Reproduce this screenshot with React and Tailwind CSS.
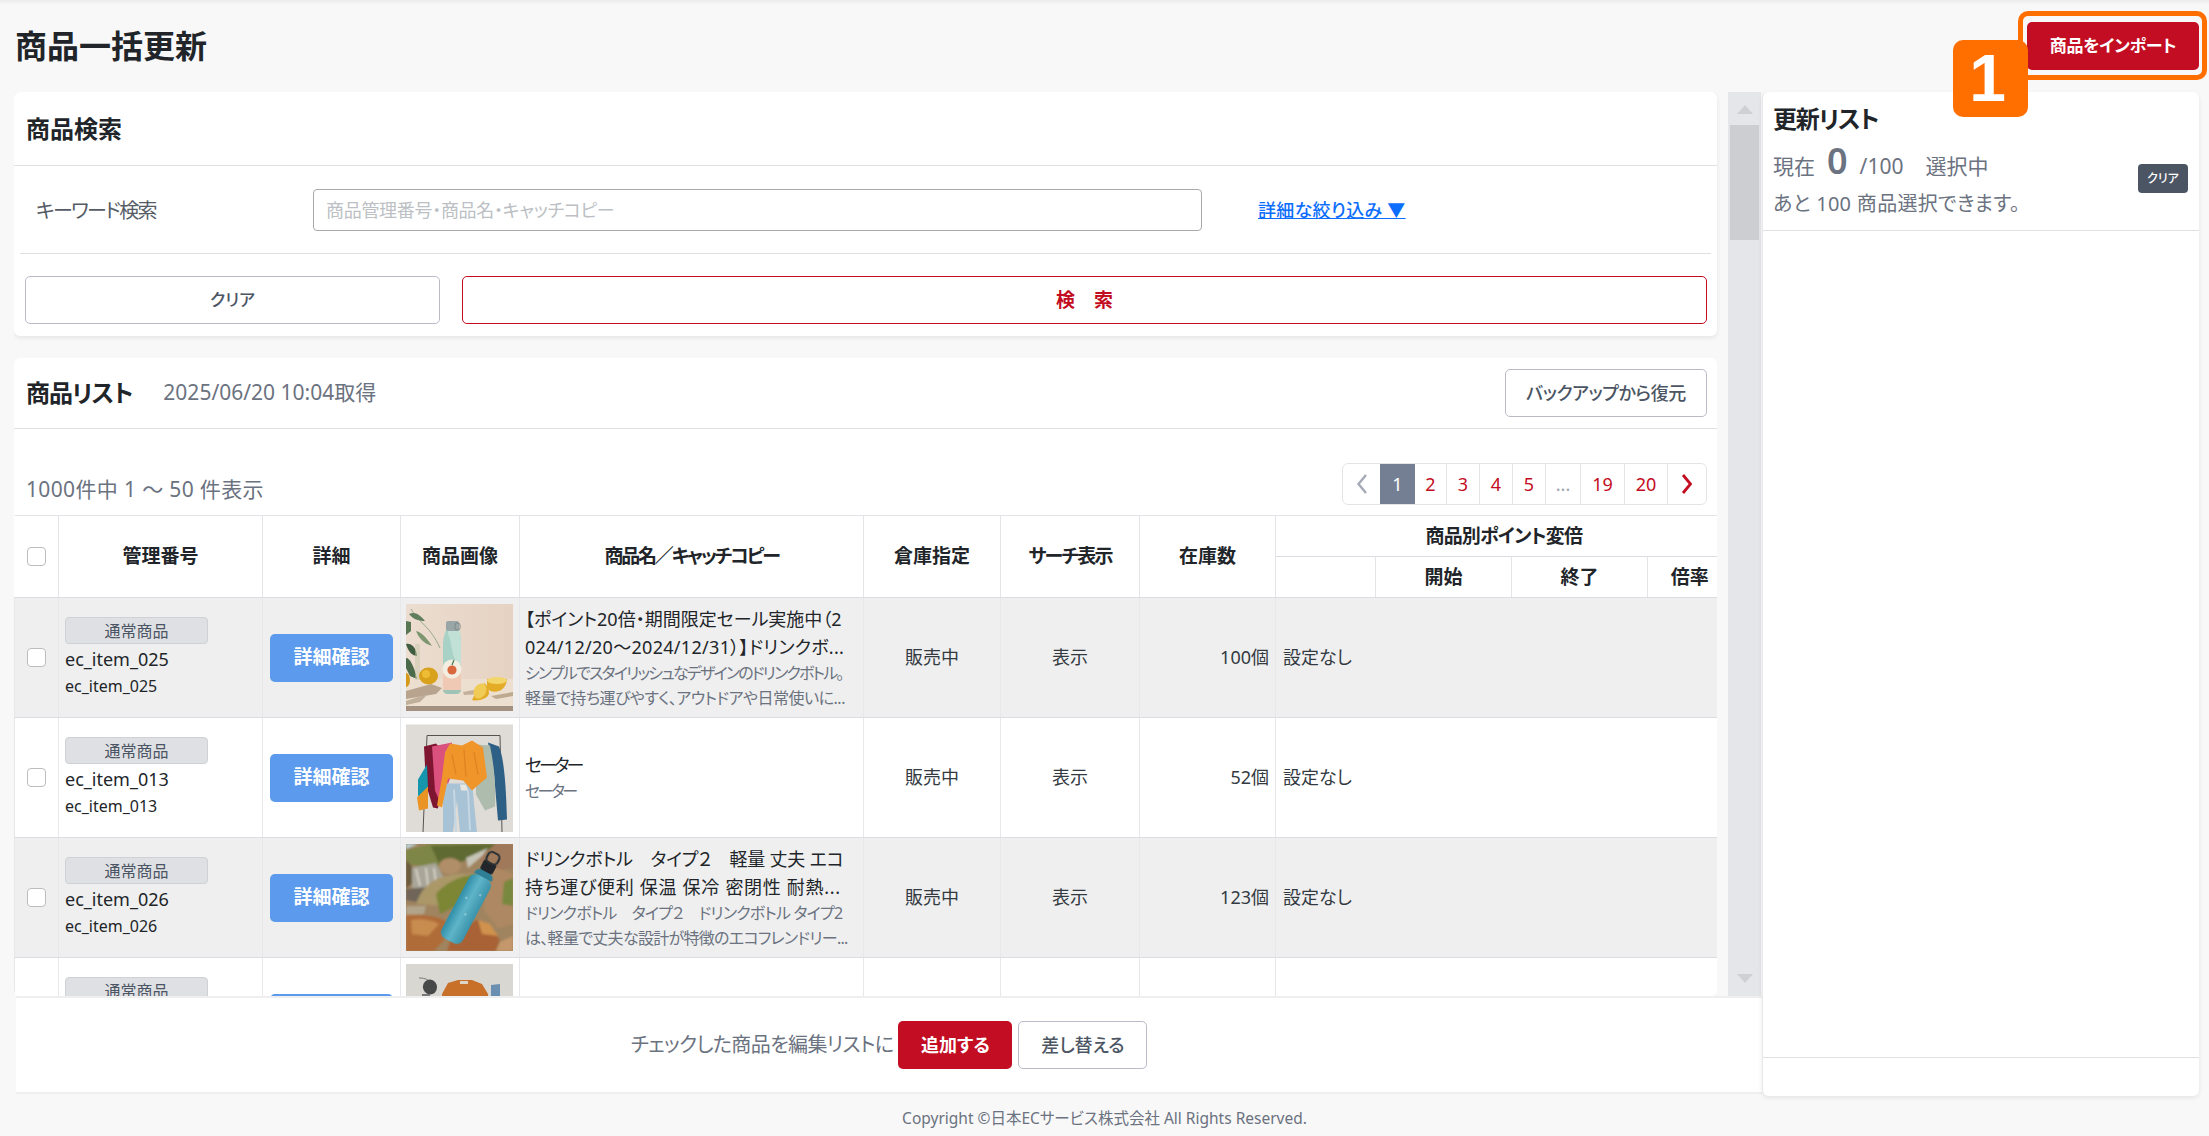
import React from 'react';

const photoBottle = (
    <svg viewBox="0 0 107 107" className="block w-[107px] h-[107px]">
        <defs>
            <filter id="soft1"><feGaussianBlur stdDeviation="0.5" /></filter>
            <linearGradient id="wall1" x1="0" x2="1" y1="0" y2="0">
                <stop offset="0" stopColor="#ecddd0" />
                <stop offset="1" stopColor="#e5d2c2" />
            </linearGradient>
        </defs>
        <rect width="107" height="107" fill="url(#wall1)" />
        <g filter="url(#soft1)">
            <rect x="0" y="75" width="107" height="27" fill="#ecdfd0" />
            <rect x="0" y="102" width="107" height="5" fill="#a5917f" />
            <path d="M0 87L25 80L36 84L30 90L0 95Z" fill="#b8a48e" />
            <path d="M0 97L22 90L14 98L0 101Z" fill="#bfae99" />
            <path d="M57 88L78 84L76 90L58 91Z" fill="#c2b09b" />
            <path d="M85 92L107 88L107 92L90 95Z" fill="#bda98e" />
            <path d="M5 5C14 20 24 22 34 44" stroke="#7e9a78" strokeWidth="0.8" fill="none" />
            <path d="M3 10C9 7 14 11 19 17C12 17 7 15 3 10Z" fill="#5f7e5c" />
            <path d="M10 27C15 28 20 33 26 42C19 40 13 35 10 27Z" fill="#7d9670" />
            <path d="M0 17L5 18L5 27L0 31Z" fill="#587652" />
            <path d="M0 40C5 39 10 43 11 52C6 52 2 47 0 40Z" fill="#3f5c3f" />
            <path d="M0 54C4 54 8 62 11 75L4 72L0 64Z" fill="#4b6a4a" />
            <rect x="9" y="40" width="5" height="36" fill="#c8c5a8" opacity="0.5" />
            <ellipse cx="22.5" cy="72" rx="9.5" ry="8.5" fill="#d9a21c" />
            <ellipse cx="20" cy="70" rx="4" ry="4" fill="#eebc36" />
            <ellipse cx="0" cy="76" rx="4" ry="7" fill="#d59a1c" />
            <path d="M40 26L53 26C55 32 55 34 55 42L55 86C55 88 53 90 50 90L42 90C39 90 37 88 37 86L37 42C37 34 38 32 40 26Z" fill="#a9d2c6" />
            <path d="M42 30C47 40 44 50 52 60L55 60L55 42C55 34 55 32 53 26L42 26Z" fill="#c1e0d6" />
            <path d="M37 68L55 68L55 86C55 88 53 90 50 90L42 90C39 90 37 88 37 86Z" fill="#efc9b3" />
            <path d="M37 86L55 86C55 88 53 90 50 90L42 90C39 90 37 88 37 86Z" fill="#9ec4b8" />
            <circle cx="46" cy="65" r="9.5" fill="#f3eee2" />
            <circle cx="46" cy="66" r="4.6" fill="#d9693e" />
            <path d="M46 61L48 56" stroke="#3f7a52" strokeWidth="1.2" />
            <rect x="40" y="17" width="13" height="10" rx="2" fill="#9aa6a5" />
            <rect x="49" y="19" width="5" height="7" rx="2" fill="none" stroke="#7e8a8a" strokeWidth="1" />
            <path d="M81 84C84 90 100 90 101 75L81 75Z" fill="#e4ab26" />
            <ellipse cx="91" cy="76.5" rx="10" ry="3.5" fill="#f2d66c" />
            <path d="M69 90L66 96C72 98 83 94 83 89C83 85 81 81 78 79Z" fill="#e4ab26" />
            <ellipse cx="74" cy="87" rx="6" ry="8" transform="rotate(30 74 87)" fill="#f0cb55" />
        </g>
    </svg>
);

const photoSweaters = (
    <svg viewBox="0 0 107 107" className="block w-[107px] h-[108px]">
        <defs><filter id="soft2"><feGaussianBlur stdDeviation="0.5" /></filter></defs>
        <rect width="107" height="108" fill="#dfdbd6" />
        <g filter="url(#soft2)">
            <path d="M17 108L21 11L94 11L96 108" fill="none" stroke="#55524f" strokeWidth="1" />
            <path d="M82 18L93 22C98 34 100 60 101 95L92 96L88 50Z" fill="#2f5f84" />
            <path d="M70 20L84 21C88 40 90 60 89 82L79 86L70 70Z" fill="#aebcae" />
            <path d="M18 22L30 19L40 30L32 84L27 83L20 60Z" fill="#7e1330" />
            <path d="M12 55L21 40L22 64L12 73Z" fill="#1296ad" />
            <path d="M11 73L22 62L22 84L13 86Z" fill="#ea9427" />
            <path d="M26 22L46 18L46 50L34 78L29 66Z" fill="#d9517c" />
            <path d="M37 59L66 59L71 108L54 108L51 76L47 108L37 108Z" fill="#a9c3d6" />
            <path d="M48 65L50 108M62 66L64 106" stroke="#c5d7e3" strokeWidth="2" />
            <path d="M44 19L56 21L66 16L77 23L81 53L66 66L57 56L42 54L36 83L31 81L36 53L39 28Z" fill="#f0952b" />
            <path d="M46 30L50 50M58 25L60 52M68 28L72 50" stroke="#d97e1c" strokeWidth="1.4" opacity="0.7" />
            <path d="M54 60L60 60L62 66L55 66Z" fill="#e8e6e0" />
        </g>
    </svg>
);

const photoRocks = (
    <svg viewBox="0 0 107 107" className="block w-[107px] h-[107px]">
        <defs>
            <filter id="soft3"><feGaussianBlur stdDeviation="0.9" /></filter>
            <linearGradient id="steel" x1="0" x2="1" y1="0" y2="0">
                <stop offset="0" stopColor="#2f8ea8" />
                <stop offset="0.45" stopColor="#5fb4c8" />
                <stop offset="1" stopColor="#3a93ab" />
            </linearGradient>
        </defs>
        <rect width="107" height="107" fill="#a08460" />
        <g filter="url(#soft3)">
            <path d="M0 0L12 0L0 5Z" fill="#b9d4dd" />
            <path d="M0 6L25 0L90 0L70 12L30 24L0 20Z" fill="#7e8646" />
            <path d="M25 2L90 0L72 14L34 22Z" fill="#5f6a32" />
            <path d="M72 14L90 0L107 0L107 24L84 28Z" fill="#a0785a" />
            <path d="M60 14L82 4L76 12L62 24Z" fill="#c6c4b6" />
            <path d="M4 24L30 19L38 34L28 44L6 44Z" fill="#a9a598" />
            <path d="M10 25L14 42M20 24L22 42M28 24L30 40" stroke="#dcdad0" strokeWidth="1.6" />
            <ellipse cx="44" cy="22" rx="11" ry="8" fill="#b08e68" />
            <path d="M0 45L34 42L20 60L0 56Z" fill="#6f6558" />
            <path d="M0 16L6 22L6 40L0 44Z" fill="#6a5c3e" />
            <path d="M10 60C16 42 28 32 52 30L70 30L40 62Z" fill="#ab9868" />
            <path d="M30 50C38 40 52 32 72 30L50 62L34 70Z" fill="#7c8636" />
            <path d="M0 62L20 62L18 70L0 72Z" fill="#b2a48a" />
            <path d="M0 71C14 70 34 72 41 78L38 96L28 107L0 107Z" fill="#b06c38" />
            <path d="M5 76C14 74 26 76 33 80L22 92L6 90Z" fill="#c88c50" />
            <path d="M41 107L46 92L70 76L84 82L94 96L90 107Z" fill="#a86236" />
            <path d="M72 76L84 80L92 92L76 90Z" fill="#d0924e" />
            <path d="M90 107L94 98L107 92L107 107Z" fill="#c4986a" />
            <path d="M80 20L107 30L107 80L92 84L78 66Z" fill="#ae8862" />
            <path d="M98 38L107 34L107 62L96 60Z" fill="#78883e" />
        </g>
        <g filter="url(#soft1)" transform="rotate(28 60 65)">
            <rect x="48" y="29" width="24" height="72" rx="7" fill="url(#steel)" />
            <path d="M50 29C50 24 54 22 60 22C66 22 70 24 70 29Z" fill="#2f7f96" />
            <circle cx="55" cy="55" r="0.8" fill="#d7eef3" />
            <circle cx="62" cy="70" r="0.8" fill="#d7eef3" />
            <circle cx="66" cy="46" r="0.8" fill="#d7eef3" />
            <rect x="53" y="12" width="14" height="11" rx="2" fill="#22282b" />
            <rect x="54" y="2" width="12" height="11" rx="4" fill="none" stroke="#2a3135" strokeWidth="2.2" />
        </g>
    </svg>
);

const photoSweatshirt = (
    <svg viewBox="0 0 107 107" className="block w-[107px] h-[107px]">
        <defs><filter id="soft4"><feGaussianBlur stdDeviation="0.5" /></filter></defs>
        <rect width="107" height="107" fill="#d9d7d2" />
        <g filter="url(#soft4)">
            <path d="M13 14C20 14 22 16 24 18" stroke="#55524f" strokeWidth="0.7" fill="none" />
            <ellipse cx="24" cy="23" rx="7" ry="7.5" transform="rotate(-20 24 23)" fill="#47484a" />
            <rect x="16" y="30" width="8" height="4" fill="#77787a" />
            <path d="M36 30L42 19L52 16L66 16L76 20L82 30L82 60L36 60Z" fill="#c8702a" />
            <rect x="54" y="17" width="8" height="3" fill="#ddd5c8" />
            <path d="M85 21L94 20L94 40L85 40Z" fill="#6a8fb0" />
        </g>
    </svg>
);

const products = [
    {
        id: 'ec_item_025',
        photo: photoBottle,
        name: [
            { text: '【ポイント20倍・期間限定セール実施中（2', cls: '' },
            { text: '024/12/20～2024/12/31）】ドリンクボ...', cls: 'tracking-[0.3px]' },
        ],
        copy: [
            { text: 'シンプルでスタイリッシュなデザインのドリンクボトル。', cls: 'tracking-[-1.8px]' },
            { text: '軽量で持ち運びやすく、アウトドアや日常使いに...', cls: 'tracking-[-0.5px]' },
        ],
        stock: '100個',
    },
    {
        id: 'ec_item_013',
        photo: photoSweaters,
        name: [{ text: 'セーター', cls: 'tracking-[-3px]' }],
        copy: [{ text: 'セーター', cls: 'tracking-[-2.5px]' }],
        stock: '52個',
    },
    {
        id: 'ec_item_026',
        photo: photoRocks,
        name: [
            { text: 'ドリンクボトル　タイプ２　軽量 丈夫 エコ', cls: 'tracking-[-0.2px]' },
            { text: '持ち運び便利 保温 保冷 密閉性 耐熱...', cls: 'tracking-[0.7px]' },
        ],
        copy: [
            { text: 'ドリンクボトル　タイプ２　ドリンクボトル タイプ2', cls: 'tracking-[-0.8px]' },
            { text: 'は、軽量で丈夫な設計が特徴のエコフレンドリー...', cls: 'tracking-[-0.7px]' },
        ],
        stock: '123個',
    },
    {
        id: 'ec_item_014',
        photo: photoSweatshirt,
        name: [{ text: 'スウェット', cls: '' }],
        copy: [{ text: 'スウェット', cls: '' }],
        stock: '80個',
    },
];

const pages = [
    { label: '1', active: true, w: 'w-[35px]' },
    { label: '2', w: 'w-[32px]' },
    { label: '3', w: 'w-[33px]' },
    { label: '4', w: 'w-[33px]' },
    { label: '5', w: 'w-[33px]' },
    { label: '...', muted: true, w: 'w-[35px]' },
    { label: '19', w: 'w-[44px]' },
    { label: '20', w: 'w-[43px]' },
];

const ThCell = ({ children, className = '', ...rest }) => (
    <th className={`border border-[#e3e4e8] border-b-[#dcdde2] text-[19px] font-bold text-[#212529] ${className}`} {...rest}>
        {children}
    </th>
);

const Check = () => (
    <input type="checkbox" className="appearance-none block mx-auto w-[19px] h-[19px] rounded-[4px] border border-[#bdbdbd] bg-white" />
);

const ProductRow = ({ item, shaded }) => {
    const td = 'border-x border-x-[#e7e8eb] border-b border-b-[#dcdde2] text-[18px] text-[#333a42]';
    return (
        <tr className={`h-[120px] ${shaded ? 'bg-[#efefef]' : 'bg-white'}`}>
            <td className={td}><Check /></td>
            <td className={`${td} pl-[6px]`}>
                <div className="w-[143px] h-[27px] flex items-center justify-center rounded-[4px] border border-[#d0d1d6] bg-[#dfe0e4] text-[16px] text-[#4b5563]">通常商品</div>
                <div className="leading-[30px] text-[18px] text-[#212529]">{item.id}</div>
                <div className="leading-[24px] text-[16px] text-[#212529]">{item.id}</div>
            </td>
            <td className={`${td} text-center`}>
                <button className="w-[123px] h-[48px] rounded-[5px] bg-[#5b9aec] text-white text-[19px] font-bold">詳細確認</button>
            </td>
            <td className={`${td} pl-[5px]`}>{item.photo}</td>
            <td className={`${td} pl-[5px] pr-[5px] whitespace-nowrap`}>
                {item.name.map((line) => (
                    <div key={line.text} className={`leading-[28px] text-[#212529] ${line.cls}`}>{line.text}</div>
                ))}
                {item.copy.map((line) => (
                    <div key={line.text} className={`leading-[25px] text-[16px] text-[#6b7280] ${line.cls}`}>{line.text}</div>
                ))}
            </td>
            <td className={`${td} text-center`}>販売中</td>
            <td className={`${td} text-center`}>表示</td>
            <td className={`${td} text-right pr-[6px]`}>{item.stock}</td>
            <td className={`${td} pl-[7px] border-r-0`} colSpan={4}>設定なし</td>
        </tr>
    );
};

export default function App() {
    return (
        <div className="h-screen overflow-hidden bg-[#f8f8f8] flex flex-col [font-family:'Noto_Sans','Noto_Sans_CJK_JP',sans-serif] [font-feature-settings:'palt']">
            <div className="h-[92px] shrink-0 bg-gradient-to-b from-[#ebebeb] from-0% to-[#f8f8f8] to-[5%] flex justify-between items-start pl-[15px] pr-[10px]">
                <h1 className="mt-[23px] text-[32px] leading-[46px] font-bold text-[#212529]">商品一括更新</h1>
                <div className="relative mt-[22px]">
                    <button className="w-[172px] h-[48px] rounded-[5px] bg-[#c30d23] text-white text-[17px] font-bold tracking-[-0.2px]">商品をインポート</button>
                    <div className="absolute -left-[9px] -top-[11px] w-[189px] h-[69px] rounded-[10px] border-[5px] border-[#ff6f00]"></div>
                    <div className="absolute -left-[74px] top-[18px] w-[75px] h-[77px] rounded-[10px] bg-[#ff6f00] flex items-center justify-center pr-[6px] text-white text-[66px] font-bold [font-family:'Liberation_Sans',sans-serif]">1</div>
                </div>
            </div>

            <div className="h-[1004px] shrink-0 flex pl-[14px]">
                <div className="w-[1748px] shrink-0 flex flex-col">
                    <div className="h-[904px] shrink-0 flex overflow-hidden">
                        <div className="w-[1703px] shrink-0 flex flex-col gap-[22px]">
                            <section className="h-[244px] shrink-0 bg-white rounded-[6px] shadow-[0_2px_5px_rgba(0,0,0,0.08)]">
                                <div className="h-[74px] flex items-center pl-[12px] border-b border-[#dfe0e4]">
                                    <h2 className="text-[24px] font-bold text-[#212529]">商品検索</h2>
                                </div>
                                <div className="mx-[6px] h-[88px] flex items-center border-b border-[#dfe0e4]">
                                    <label className="w-[293px] pl-[16px] pt-[2px] text-[20px] tracking-[-1.7px] text-[#555c66]">キーワード検索</label>
                                    <input
                                        placeholder="商品管理番号・商品名・キャッチコピー"
                                        className="w-[889px] h-[42px] px-[12px] rounded-[4px] border border-[#a9a9a9] text-[18px] tracking-[-0.3px] placeholder:text-[#bcbfc4]"
                                    />
                                    <a href="#" className="ml-[56px] pt-[2px] text-[18px] tracking-[0.3px] font-medium text-[#0d6efd] underline">詳細な絞り込み ▼</a>
                                </div>
                                <div className="flex gap-[22px] pl-[11px] pr-[10px] pt-[22px]">
                                    <button className="w-[415px] h-[48px] rounded-[5px] border border-[#b9bcc7] bg-white text-[17px] font-medium text-[#4b5563]">クリア</button>
                                    <button className="flex-1 h-[48px] rounded-[5px] border border-[#c30d23] bg-white text-[19px] font-bold text-[#c30d23]">検　索</button>
                                </div>
                            </section>

                            <section className="flex-1 bg-white rounded-[6px] overflow-hidden">
                                <div className="h-[71px] flex items-center pl-[12px] pr-[10px] border-b border-[#dfe0e4]">
                                    <h2 className="text-[24px] tracking-[-1px] font-bold text-[#212529]">商品リスト</h2>
                                    <span className="ml-[31px] text-[21px] text-[#6b7280]">2025/06/20 10:04取得</span>
                                    <button className="ml-auto w-[202px] h-[48px] rounded-[5px] border border-[#b9bcc7] bg-white text-[18px] tracking-[-0.4px] font-medium text-[#4b5563]">バックアップから復元</button>
                                </div>
                                <div className="h-[86px] flex items-end justify-between pl-[12px] pr-[10px] pb-[10px]">
                                    <span className="-mb-[5px] text-[21px] tracking-[0.35px] leading-[42px] text-[#6b7280]">1000件中 1 〜 50 件表示</span>
                                    <nav className="flex h-[42px] rounded-[6px] border border-[#e3e4e8] overflow-hidden">
                                        <span className="w-[37px] flex items-center justify-center">
                                            <svg width="12" height="22" viewBox="0 0 12 22" fill="none" stroke="#a4aab6" strokeWidth="2.4"><path d="M10 2L2.5 11L10 20" /></svg>
                                        </span>
                                        {pages.map((p) => (
                                            <span
                                                key={p.label}
                                                className={`${p.w} flex items-center justify-center text-[18px] ${p.active ? 'bg-[#747f93] text-white' : p.muted ? 'border-r border-[#e3e4e8] text-[#9ca3af] text-[14px]' : 'border-r border-[#e3e4e8] text-[#c30d23]'}`}
                                            >
                                                {p.label}
                                            </span>
                                        ))}
                                        <span className="w-[38px] flex items-center justify-center">
                                            <svg width="12" height="22" viewBox="0 0 12 22" fill="none" stroke="#c30d23" strokeWidth="2.8"><path d="M2 2L9.5 11L2 20" /></svg>
                                        </span>
                                    </nav>
                                </div>
                                <table className="w-[1717px] max-w-none table-fixed border-collapse">
                                    <colgroup>
                                        <col className="w-[44px]" />
                                        <col className="w-[204px]" />
                                        <col className="w-[138px]" />
                                        <col className="w-[119px]" />
                                        <col className="w-[344px]" />
                                        <col className="w-[137px]" />
                                        <col className="w-[139px]" />
                                        <col className="w-[136px]" />
                                        <col className="w-[100px]" />
                                        <col className="w-[136px]" />
                                        <col className="w-[136px]" />
                                        <col className="w-[84px]" />
                                    </colgroup>
                                    <thead>
                                        <tr className="h-[41px]">
                                            <ThCell rowSpan={2} className="border-l-0"><Check /></ThCell>
                                            <ThCell rowSpan={2}>管理番号</ThCell>
                                            <ThCell rowSpan={2}>詳細</ThCell>
                                            <ThCell rowSpan={2}>商品画像</ThCell>
                                            <ThCell rowSpan={2} className="tracking-[-2.2px]">商品名／キャッチコピー</ThCell>
                                            <ThCell rowSpan={2}>倉庫指定</ThCell>
                                            <ThCell rowSpan={2} className="tracking-[-1.8px]">サーチ表示</ThCell>
                                            <ThCell rowSpan={2}>在庫数</ThCell>
                                            <ThCell colSpan={4} className="border-r-0 tracking-[-0.8px]">商品別ポイント変倍</ThCell>
                                        </tr>
                                        <tr className="h-[41px]">
                                            <ThCell></ThCell>
                                            <ThCell>開始</ThCell>
                                            <ThCell>終了</ThCell>
                                            <ThCell className="border-r-0">倍率</ThCell>
                                        </tr>
                                    </thead>
                                    <tbody>
                                        {products.map((item, i) => (
                                            <ProductRow key={item.id} item={item} shaded={i % 2 === 0} />
                                        ))}
                                    </tbody>
                                </table>
                            </section>
                        </div>
                        <div className="ml-[11px] w-[33px] bg-[#e5e6ea] flex flex-col items-center">
                            <svg width="16" height="9" viewBox="0 0 16 9" className="mt-[13px]"><path d="M8 0L16 9L0 9Z" fill="#cfd0d3" /></svg>
                            <div className="mt-[11px] w-[29px] h-[115px] bg-[#cdced2]"></div>
                            <svg width="16" height="9" viewBox="0 0 16 9" className="mt-auto mb-[13px]"><path d="M8 9L16 0L0 0Z" fill="#cfd0d3" /></svg>
                        </div>
                    </div>
                    <div className="h-[98px] ml-[2px] bg-white border-y-2 border-[#efefef] flex items-center justify-center gap-[5px]">
                        <span className="text-[20px] tracking-[-0.6px] text-[#6b7280]">チェックした商品を編集リストに</span>
                        <button className="w-[114px] h-[48px] rounded-[5px] bg-[#c30d23] text-white text-[18px] font-bold">追加する</button>
                        <button className="ml-[1px] w-[129px] h-[48px] rounded-[5px] border border-[#b9bcc7] bg-white text-[18px] font-medium text-[#4b5563]">差し替える</button>
                    </div>
                </div>

                <aside className="w-[437px] shrink-0 h-full bg-white rounded-[6px] border-l border-[#e8e8ea] shadow-[0_2px_5px_rgba(0,0,0,0.08)] flex flex-col">
                    <div className="h-[139px] shrink-0 border-b border-[#dfe0e4] pl-[10px] pr-[10px] relative">
                        <h2 className="pt-[9px] text-[24px] tracking-[-1.2px] leading-[35px] font-bold text-[#212529]">更新リスト</h2>
                        <div className="mt-[3px] flex items-baseline text-[21px] text-[#6b7280]">
                            <span>現在</span>
                            <span className="ml-[12px] mr-[12px] text-[36px] leading-[44px] font-semibold">0</span>
                            <span>/100</span>
                            <span className="ml-[22px]">選択中</span>
                        </div>
                        <p className="mt-[6px] text-[20px] tracking-[0.3px] leading-[30px] text-[#6b7280]">あと 100 商品選択できます。</p>
                        <button className="absolute right-[11px] top-[72px] w-[50px] h-[29px] rounded-[4px] bg-[#4b5563] text-white text-[12px] font-medium">クリア</button>
                    </div>
                    <div className="flex-1"></div>
                    <div className="h-[39px] shrink-0 border-t border-[#dfe0e4]"></div>
                </aside>
            </div>

            <footer className="flex-1 flex items-center justify-center pt-[5px] text-[15.5px] text-[#6b7280]">Copyright ©日本ECサービス株式会社 All Rights Reserved.</footer>
        </div>
    );
}
